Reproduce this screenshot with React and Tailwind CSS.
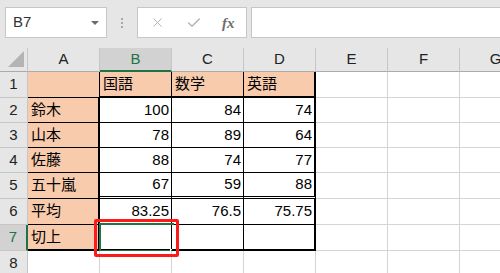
import { X, Check } from 'lucide-react';

const FONT = { fontFamily: '"Liberation Sans", "Noto Sans CJK JP", sans-serif' };

const cols = ['A', 'B', 'C', 'D', 'E', 'F', 'G'];

const rows = [
  { n: 1, h: 'h-[26px]', a: '', b: '国語', c: '数学', d: '英語', head: true },
  { n: 2, h: 'h-[25px]', a: '鈴木', b: '100', c: '84', d: '74' },
  { n: 3, h: 'h-[25px]', a: '山本', b: '78', c: '89', d: '64' },
  { n: 4, h: 'h-[25px]', a: '佐藤', b: '88', c: '74', d: '77' },
  { n: 5, h: 'h-[26px]', a: '五十嵐', b: '67', c: '59', d: '88' },
  { n: 6, h: 'h-[26px]', a: '平均', b: '83.25', c: '76.5', d: '75.75' },
  { n: 7, h: 'h-[26px]', a: '切上', b: '', c: '', d: '' },
  { n: 8, h: 'h-[25px]' },
];

// border classes for table cells, written out in full
function cellClass(n, col) {
  if (n === 8 || col === 'E' || col === 'F' || col === 'G') {
    return 'bg-white border-r border-b border-[#d4d4d4]';
  }
  if (col === 'A') {
    const right = n === 1 ? 'border-r border-r-black' : 'border-r-2 border-r-black';
    const bottom = n === 7 ? 'border-b-2 border-b-black' : 'border-b border-b-black';
    return `bg-[#f8cbad] ${right} ${bottom}`;
  }
  const bg = n === 1 ? 'bg-[#f8cbad]' : 'bg-white';
  const right = col === 'D' ? 'border-r-2 border-r-black' : 'border-r border-r-black';
  let bottom = 'border-b border-b-black';
  if (n === 1 || n === 7) bottom = 'border-b-2 border-b-black';
  if (n === 5) bottom = 'border-b-[3px] border-double border-b-black';
  return `${bg} ${right} ${bottom}`;
}

function Toolbar() {
  return (
    <div className="h-[48px] bg-[#e6e6e6] flex items-start pt-[7px] pl-[5px]">
      <div className="w-[102px] h-[31px] bg-white border border-[#c6c6c6] flex items-center justify-between pl-[7px] pr-[7px]">
        <span className="text-[15px] text-[#333]">B7</span>
        <span className="w-0 h-0 border-l-[4px] border-r-[4px] border-t-[4px] border-l-transparent border-r-transparent border-t-[#6b6b6b]" />
      </div>
      <div className="w-[30px] h-[31px] flex flex-col items-center justify-center gap-[2px]">
        <span className="w-[2px] h-[2px] bg-[#a8a8a8]" />
        <span className="w-[2px] h-[2px] bg-[#a8a8a8]" />
        <span className="w-[2px] h-[2px] bg-[#a8a8a8]" />
      </div>
      <div className="w-[110px] h-[31px] bg-white border border-[#c6c6c6] relative flex items-center">
        <X className="absolute left-[12px] top-[7px] w-[15px] h-[15px] text-[#b4b4b4]" strokeWidth={1.6} />
        <Check className="absolute left-[48px] top-[7px] w-[16px] h-[16px] text-[#b4b4b4]" strokeWidth={2.2} />
        <span
          className="absolute left-[84px] top-[4px] text-[15px] italic font-bold text-[#6e6e6e]"
          style={{ fontFamily: '"Liberation Serif", serif' }}
        >
          fx
        </span>
      </div>
      <div className="ml-[4px] flex-1 h-[31px] bg-white border border-r-0 border-[#c6c6c6]" />
    </div>
  );
}

function HeaderRow() {
  return (
    <div className="flex h-[24px]">
      <div className="w-[28px] shrink-0 bg-[#e6e6e6] border-r border-[#c6c6c6] border-b border-b-[#ababab] relative">
        <svg className="absolute left-[7px] top-[3px]" width="18" height="17" viewBox="0 0 18 17">
          <polygon points="1,16 17,0 17,16" fill="#b4b4b4" />
        </svg>
      </div>
      {cols.map((c) =>
        c === 'B' ? (
          <div key={c} className="w-[72px] shrink-0 bg-[#d2d2d2] border-r border-[#c6c6c6] border-b-2 border-b-[#217346] flex items-center justify-center text-[15px] text-[#217346]">
            {c}
          </div>
        ) : (
          <div key={c} className="w-[72px] shrink-0 bg-[#e6e6e6] border-r border-[#c6c6c6] border-b border-b-[#ababab] flex items-center justify-center text-[15px] text-[#222]">
            {c}
          </div>
        )
      )}
    </div>
  );
}

function Row({ r }) {
  const selected = r.n === 7;
  return (
    <div className={`flex ${r.h}`}>
      {selected ? (
        <div className="w-[28px] shrink-0 bg-[#d2d2d2] border-r-2 border-r-[#217346] border-b border-b-[#c6c6c6] flex items-center justify-center text-[15px] text-[#217346]">
          {r.n}
        </div>
      ) : (
        <div className="w-[28px] shrink-0 bg-[#e6e6e6] border-r border-r-[#c6c6c6] border-b border-b-[#c6c6c6] flex items-center justify-center text-[15px] text-[#222]">
          {r.n}
        </div>
      )}
      {cols.map((c) => {
        const key = c.toLowerCase();
        const val = r[key];
        const isText = c === 'A' || r.head;
        const isB7 = selected && c === 'B';
        return (
          <div
            key={c}
            className={`w-[72px] shrink-0 relative flex items-center text-[15px] text-black ${isText ? 'justify-start pl-[3px]' : 'justify-end pr-[2px]'} ${cellClass(r.n, c)}`}
          >
            {val}
            {isB7 && (
              <>
                <div className="absolute left-[-1px] top-[-2px] w-[75px] h-[29px] border-2 border-[#217346]" />
                <div className="absolute left-[70px] top-[24px] w-[6px] h-[6px] bg-[#217346] border border-white" />
              </>
            )}
          </div>
        );
      })}
    </div>
  );
}

export default function App() {
  return (
    <div className="w-[500px] h-[273px] overflow-hidden bg-white relative" style={FONT}>
      <Toolbar />
      <div className="w-[532px]">
        <HeaderRow />
        {rows.map((r) => (
          <Row key={r.n} r={r} />
        ))}
      </div>
      {/* red annotation frame */}
      <div className="absolute left-[94px] top-[219px] w-[85px] h-[38px] border-[3px] border-[#ff1a1a] rounded-[2px]" />
    </div>
  );
}
